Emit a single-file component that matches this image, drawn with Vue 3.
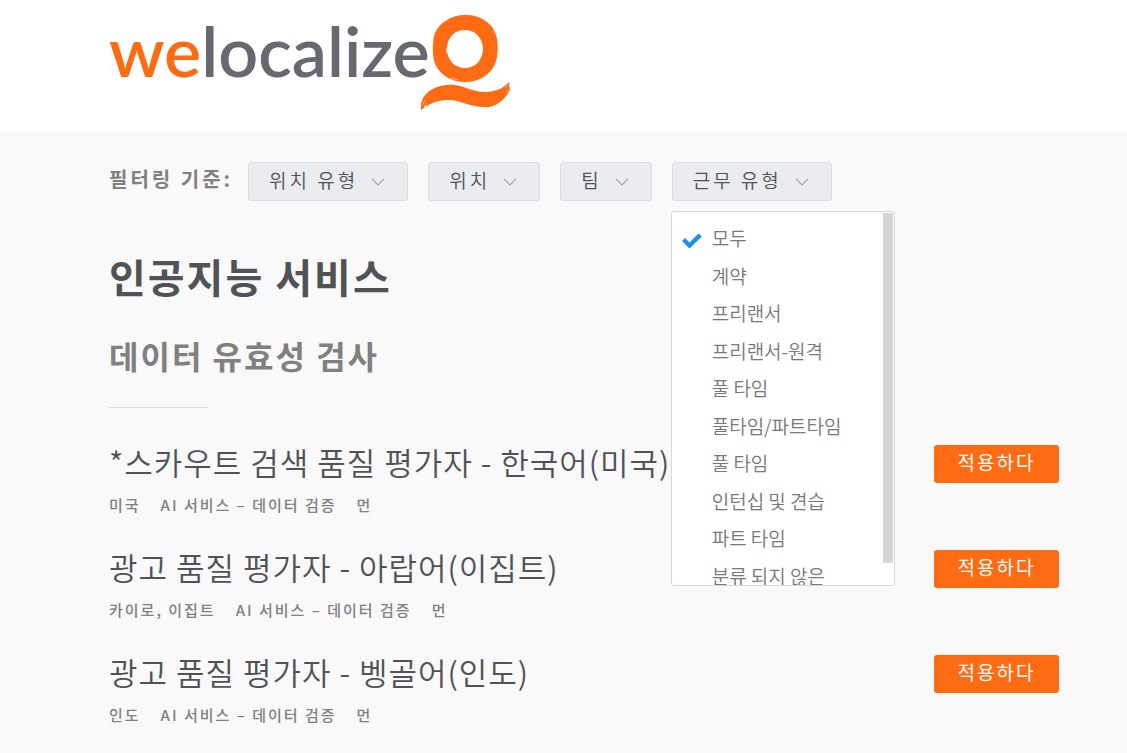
<script setup>
import { ref } from 'vue'

const filters = [
  { id: 'locationType', label: '위치 유형' },
  { id: 'location', label: '위치' },
  { id: 'team', label: '팀' },
  { id: 'workType', label: '근무 유형' },
]

const workTypes = [
  '모두',
  '계약',
  '프리랜서',
  '프리랜서-원격',
  '풀 타임',
  '풀타임/파트타임',
  '풀 타임',
  '인턴십 및 견습',
  '파트 타임',
  '분류 되지 않은',
]

const jobs = [
  { title: '*스카우트 검색 품질 평가자 - 한국어(미국)', place: '미국' },
  { title: '광고 품질 평가자 - 아랍어(이집트)', place: '카이로, 이집트' },
  { title: '광고 품질 평가자 - 벵골어(인도)', place: '인도' },
]

const openFilter = ref('workType')
const selected = ref(0)

function toggle(id) {
  openFilter.value = openFilter.value === id ? '' : id
}
</script>

<template>
  <div class="page">
    <header class="header">
      <a class="logo" href="#" aria-label="welocalize">
        <span class="wordmark"><span class="we">we</span>localize</span>
        <svg class="mark" viewBox="0 0 92 98" width="92" height="98" aria-hidden="true">
          <path
            fill="#ff6b12"
            fill-rule="evenodd"
            d="M45 1C56 0 67 6 73 14C79 22 79 42 75 50C70 61 59 68 45 68C32 68 22 62 16 52C12 45 12 26 15 19C20 8 32 1 45 1ZM45 16C34 16 27 24 27 35C27 46 35 54 45 54C55 54 63 46 63 35C63 24 55 16 45 16Z"
          />
          <path
            fill="#ff6b12"
            d="M1 96L1 89L3 84L6 80C12 74 22 70 34 71C46 72 54 79 67 78C77 77 83 74 87 70L90 68L89 71L90 76L87 81C81 89 73 94 64 93C50 93 43 87 30 86C20 86 13 88 7 92L5 92L4 94Z"
          />
          <path
            fill="none"
            stroke="#ffffff"
            stroke-width="0.5"
            d="M2 91l3-5M4 93l3-4M85 74l3-3M86 79l3-4M27 40l-1-6M73 15l3 6M31 64l7 2"
          />
        </svg>
      </a>
    </header>

    <main class="content">
      <section class="filters" aria-label="필터링 기준">
        <span class="filters-label">필터링 기준:</span>
        <div class="filter-list">
          <div v-for="f in filters" :key="f.id" class="filter">
            <button
              type="button"
              class="filter-button"
              aria-haspopup="true"
              :aria-expanded="openFilter === f.id"
              @click="toggle(f.id)"
            >
              <span class="filter-text">{{ f.label }}</span>
              <svg width="14" height="8" viewBox="0 0 14 8" aria-hidden="true">
                <path d="M1 1L7 7L13 1" fill="none" stroke="#a3a5aa" stroke-width="1.1" />
              </svg>
            </button>
            <div v-if="f.id === 'workType' && openFilter === f.id" class="menu">
              <ul class="options">
                <li v-for="(name, i) in workTypes" :key="i">
                  <button type="button" class="option" :aria-pressed="selected === i" @click="selected = i">
                    <span class="tick">
                      <svg v-if="selected === i" width="20" height="16" viewBox="0 0 20 16" aria-hidden="true">
                        <path d="M0 8L3 5L7.500 9.500L16.500 0.500L19.800 3.500L7.500 15.500Z" fill="#1a91eb" />
                      </svg>
                    </span>
                    {{ name }}
                  </button>
                </li>
              </ul>
              <div class="scroll-thumb"></div>
            </div>
          </div>
        </div>
      </section>

      <h1>인공지능 서비스</h1>
      <h2>데이터 유효성 검사</h2>

      <article v-for="job in jobs" :key="job.title" class="job">
        <div class="job-info">
          <h3><a href="#">{{ job.title }}</a></h3>
          <p class="meta">
            <span>{{ job.place }}</span>
            <span>AI 서비스 – 데이터 검증</span>
            <span>먼</span>
          </p>
        </div>
        <a class="apply" href="#">적용하다</a>
      </article>
    </main>
  </div>
</template>

<style>
body {
  margin: 0;
  background: #f9f9f9;
}
</style>

<style scoped>
.page {
  font-family: "Noto Sans CJK KR", sans-serif;
  color: #505256;
}

.page * {
  box-sizing: border-box;
}

.header {
  background: #fff;
  height: 131px;
  padding: 14px 68px 0 109px;
}

.logo {
  display: inline-flex;
  align-items: flex-start;
  text-decoration: none;
}

.wordmark {
  width: 311px;
  font: 600 70px/72px Lato, sans-serif;
  color: #66696f;
  white-space: nowrap;
}

.we {
  color: #ff6b12;
}

.mark {
  flex: none;
}

.content {
  padding: 31px 68px 0 109px;
}

.filters {
  display: flex;
  align-items: flex-start;
  gap: 15px;
}

.filters-label {
  font-size: 20px;
  line-height: 34px;
  font-weight: 700;
  letter-spacing: 3px;
  color: #808080;
  white-space: nowrap;
}

.filter-list {
  display: flex;
  gap: 20px;
}

.filter {
  position: relative;
}

.filter-button {
  display: flex;
  align-items: center;
  gap: 13px;
  height: 39px;
  padding: 0 22px 0 20px;
  border: 1px solid #dcdde0;
  border-radius: 3px;
  background: #ebecf0;
  color: #505256;
  font-family: inherit;
  font-size: 19px;
  font-weight: 350;
  letter-spacing: 3px;
  white-space: nowrap;
}

.filter-text {
  padding-bottom: 4px;
}

.menu {
  position: absolute;
  z-index: 2;
  top: 49px;
  left: -1px;
  width: 224px;
  height: 375px;
  overflow: hidden;
  border: 1px solid #d9d9db;
  border-radius: 3px;
  background: #fff;
}

.options {
  display: grid;
  grid-auto-rows: 1fr;
  height: 375px;
  margin: 7px 0 0;
  padding: 0;
  list-style: none;
}

.option {
  display: flex;
  align-items: center;
  width: 100%;
  height: 100%;
  padding: 0 10px;
  border: 0;
  background: none;
  color: #77787a;
  font-family: inherit;
  font-size: 19px;
  font-weight: 350;
  white-space: nowrap;
}

.tick {
  display: flex;
  width: 30px;
  padding-top: 6px;
}

.scroll-thumb {
  position: absolute;
  top: 1px;
  right: 1px;
  width: 10px;
  height: 350px;
  background: #d5d5d7;
}

h1 {
  margin: 45px 0 0;
  font-size: 40px;
  line-height: 60px;
  font-weight: 700;
  letter-spacing: 2px;
}

h2 {
  margin: 25px 0 0;
  font-size: 32px;
  line-height: 48px;
  font-weight: 700;
  letter-spacing: 2px;
  color: #808080;
}

h2::after {
  content: "";
  display: block;
  width: 100px;
  margin-top: 28px;
  border-top: 1px solid #dfdfdf;
}

.job {
  display: flex;
  align-items: flex-start;
  justify-content: space-between;
  height: 105px;
}

h2 + .job {
  margin-top: 37px;
}

h3 {
  margin: 0;
  font-size: 31px;
  line-height: 34px;
  font-weight: 350;
  letter-spacing: 1px;
}

h3 a {
  color: inherit;
  text-decoration: none;
}

.meta {
  display: flex;
  gap: 20px;
  margin: 15px 0 0;
  font-size: 15px;
  line-height: 22px;
  font-weight: 500;
  letter-spacing: 2px;
  color: #808080;
}

.apply {
  flex: none;
  width: 125px;
  height: 38px;
  border-radius: 3px;
  background: #ff6b12;
  color: #fff;
  font-size: 19px;
  line-height: 34px;
  font-weight: 400;
  letter-spacing: 2px;
  text-align: center;
  text-decoration: none;
}
</style>
